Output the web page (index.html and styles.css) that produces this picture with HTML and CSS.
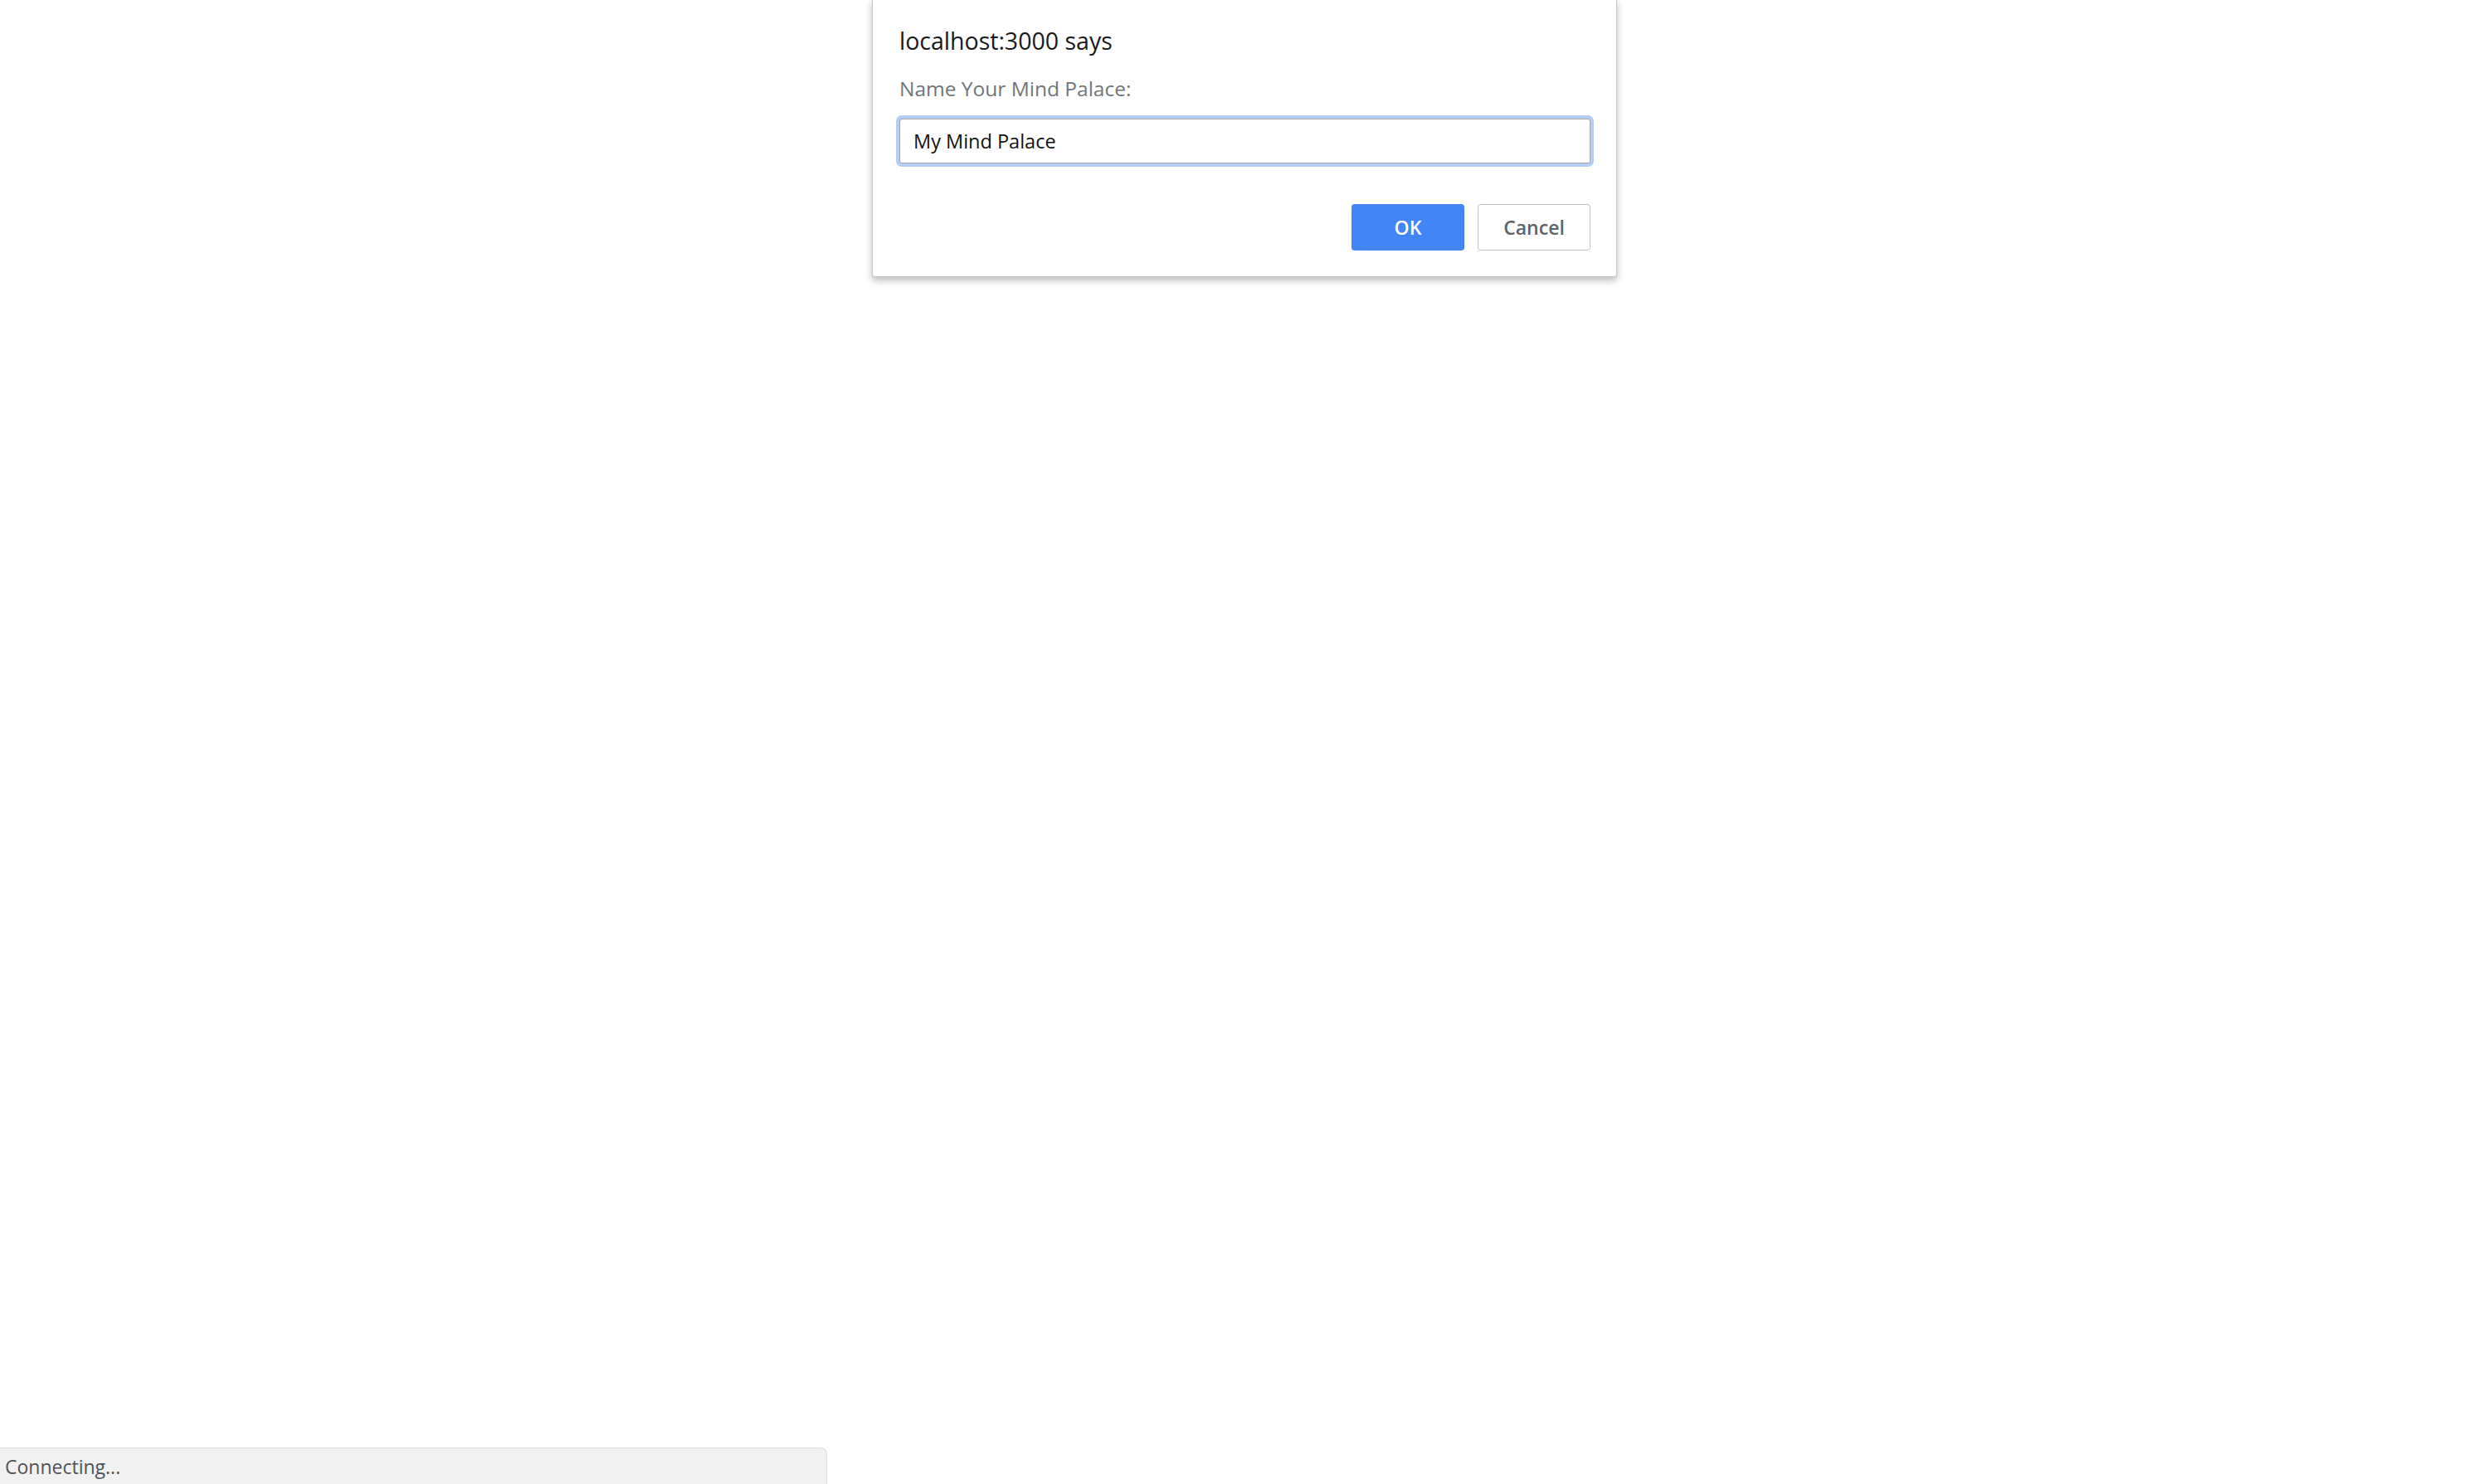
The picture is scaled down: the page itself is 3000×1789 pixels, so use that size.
FILE: index.html
```html
<!DOCTYPE html>
<html>
  <head>
    <title>Mind Palace</title>
    <meta charset="UTF-8" />
    <link rel="stylesheet" href="styles.css">
  </head>
  <body>
    <div class="page">
      <div class="dialog">
        <h1 class="title">localhost:3000 says</h1>
        <p class="message">Name Your Mind Palace:</p>
        <input class="answer" type="text" value="My Mind Palace">
        <div class="buttons">
          <button class="ok">OK</button>
          <button class="cancel">Cancel</button>
        </div>
      </div>
      <div class="status">Connecting...</div>
    </div>
  </body>
</html>
```

FILE: styles.css
```css
body {
  margin: 0;
  background: white;
  font-family: "Open Sans", "Noto Sans", sans-serif;
}

.page {
  height: 100vh;
  display: flex;
  flex-direction: column;
}

.dialog {
  width: 833px;
  margin: 0 auto;
  padding: 29px 31px 31px 32px;
  background: white;
  border: 1px solid #c6c6c6;
  border-top: none;
  border-radius: 0 0 3px 3px;
  box-shadow: 0 4px 10px rgba(0, 0, 0, 0.28);
  display: flex;
  flex-direction: column;
}

.title {
  margin: 0;
  font-size: 28.5px;
  font-weight: normal;
  line-height: 40px;
  color: #1a1a1a;
}

.message {
  margin: 22px 0 0;
  font-size: 24.5px;
  line-height: 32px;
  color: #70757a;
}

.answer {
  margin: 20px 0 0;
  height: 54px;
  box-sizing: border-box;
  padding: 0 16px;
  border: 1px solid #a4a4a4;
  border-radius: 3px;
  box-shadow: 0 0 0 4px #b3cdf7;
  outline: none;
  font-family: inherit;
  font-size: 23.5px;
  color: #111;
}

.buttons {
  margin-top: 49px;
  display: flex;
  justify-content: flex-end;
  gap: 16px;
}

.buttons button {
  width: 136px;
  height: 56px;
  border-radius: 4px;
  font-family: inherit;
  font-size: 23px;
  font-weight: 600;
}

.ok {
  background: #4285f4;
  border: none;
  color: white;
}

.cancel {
  background: white;
  border: 1px solid #c2c2c2;
  color: #5f6368;
}

.status {
  margin-top: auto;
  width: 990px;
  height: 43px;
  padding-left: 6px;
  background: #f1f1f1;
  border-top: 1px solid #dedede;
  border-right: 1px solid #dedede;
  border-top-right-radius: 8px;
  font-size: 23px;
  line-height: 44px;
  color: #4f5358;
}
```
